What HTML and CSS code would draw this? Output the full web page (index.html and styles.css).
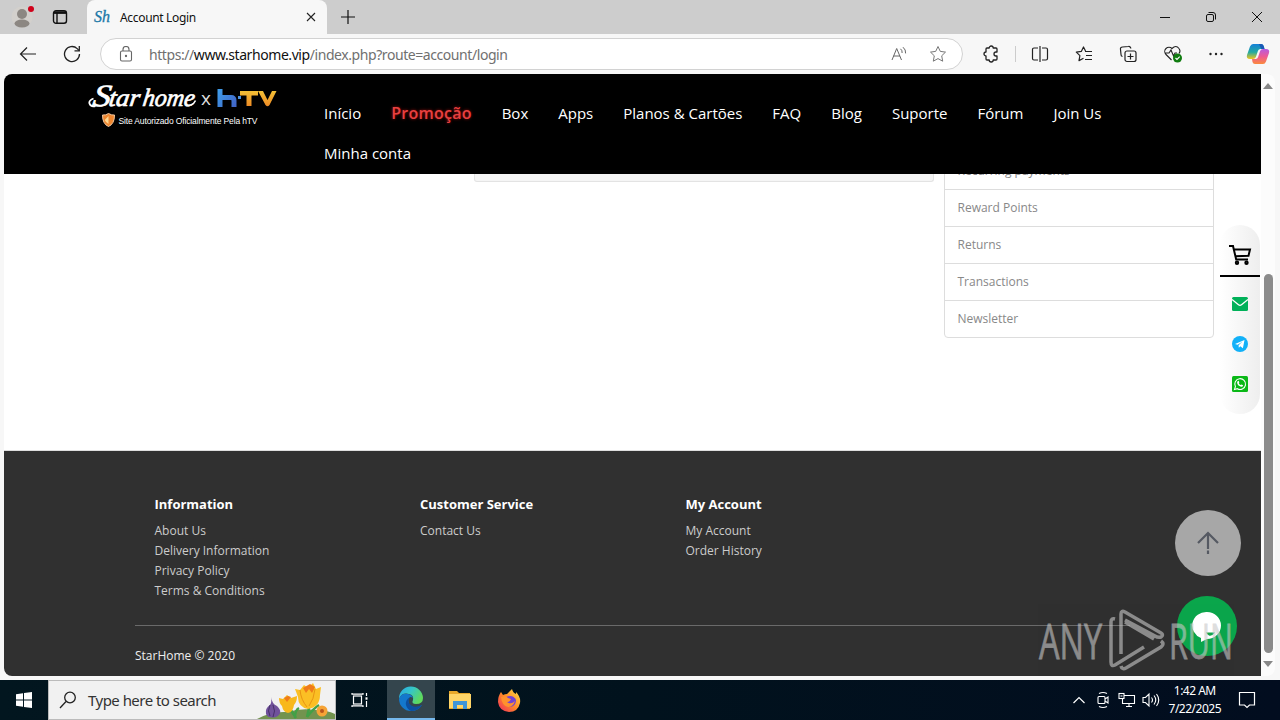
FILE: index.html
```html
<!DOCTYPE html>
<html lang="pt">
<head>
  <meta charset="utf-8">
  <meta name="viewport" content="width=device-width, initial-scale=1">
  <title>Account Login</title>
  <link rel="stylesheet" href="styles.css">
</head>
<body>
  <!-- Tab strip -->
  <div class="tab-strip">
    <svg class="profile" width="24" height="24" viewBox="0 0 24 24">
      <circle cx="11" cy="12" r="10.500" fill="#d3d0cc"/>
      <circle cx="11" cy="9" r="5" fill="#8c8782"/>
      <ellipse cx="11" cy="18.500" rx="7.500" ry="4" fill="#8c8782"/>
      <circle cx="20" cy="4" r="4" fill="#cdcdcd"/>
      <circle cx="20" cy="4" r="3" fill="#d0021b"/>
    </svg>
    <svg class="workspaces" width="16" height="16" viewBox="0 0 16 16" fill="none" stroke="#111" stroke-width="1.400">
      <rect x="1.500" y="1.700" width="13" height="12.600" rx="2.500"/>
      <path d="M2 3.600h12" stroke-width="2.600"/>
      <path d="M5 4v10"/>
    </svg>
    <div class="tab">
      <span class="favicon">Sh</span>
      <span class="tab-title">Account Login</span>
      <svg class="tab-close" width="10" height="10" viewBox="0 0 10 10" stroke="#222" stroke-width="1.100"><path d="M1 1l8 8M9 1l-8 8"/></svg>
    </div>
    <svg class="new-tab" width="14" height="14" viewBox="0 0 14 14" stroke="#111" stroke-width="1.200"><path d="M7 0v14M0 7h14"/></svg>
    <div class="window-buttons">
      <svg width="12" height="12" viewBox="0 0 12 12" stroke="#111"><path d="M1 6.500h10"/></svg>
      <svg width="12" height="12" viewBox="0 0 12 12" stroke="#111" fill="none"><rect x="1.500" y="3.500" width="7" height="7" rx="1.500"/><path d="M3.500 1.500h4.500a2.500 2.500 0 0 1 2.500 2.500v4.500"/></svg>
      <svg width="12" height="12" viewBox="0 0 12 12" stroke="#111"><path d="M1 1l10 10M11 1L1 11"/></svg>
    </div>
  </div>

  <!-- Toolbar -->
  <div class="toolbar">
    <svg class="back" width="18" height="16" viewBox="0 0 18 16" fill="none" stroke="#222" stroke-width="1.200"><path d="M17 8H1.500M8 1.500L1.500 8 8 14.500"/></svg>
    <svg class="reload" width="18" height="18" viewBox="0 0 18 18" fill="none" stroke="#222" stroke-width="1.300"><path d="M16.500 9a7.500 7.500 0 1 1-2.300-5.400l2 2"/><path d="M16.300 1v4.800h-4.800"/></svg>
    <div class="address-bar">
      <svg width="14" height="16" viewBox="0 0 14 16" fill="none" stroke="#666" stroke-width="1.100"><rect x="1.500" y="5" width="11" height="10" rx="1.500"/><path d="M4 5V3.500a3 3 0 0 1 6 0V5"/><circle cx="7" cy="10" r=".6" fill="#555"/></svg>
      <span class="url">https://<b>www.starhome.vip</b>/index.php?route=account/login</span>
      <svg class="read-aloud" width="16" height="16" viewBox="0 0 16 16" fill="none" stroke="#666"><path d="M1 14L5.700 2.500 10.500 14M2.500 10h6.500M9.500 2.800q2 1.700 1.600 4.200M12 1.200q3 2.500 2.600 6.200"/></svg>
      <svg width="18" height="18" viewBox="0 0 18 18" fill="none" stroke="#777" stroke-linejoin="round"><path d="M9 1.500l2.300 4.900 5.200.7-3.800 3.700 1 5.400L9 13.600l-4.700 2.600 1-5.400L1.500 7.100l5.200-.7z"/></svg>
    </div>
    <div class="toolbar-icons">
      <svg width="18" height="18" viewBox="0 0 18 18" fill="none" stroke="#222" stroke-width="1.300" stroke-linejoin="round"><path d="M5 3h2.200a2 2 0 0 1 4 0H14a1 1 0 0 1 1 1v3h-1a2 2 0 0 0 0 4h1v3a1 1 0 0 1-1 1h-2.800a2 2 0 0 1-4 0H5a1 1 0 0 1-1-1v-3a2 2 0 0 1 0-4V4a1 1 0 0 1 1-1z"/></svg>
      <i class="separator"></i>
      <svg width="18" height="18" viewBox="0 0 18 18" fill="none" stroke="#222" stroke-width="1.200"><path d="M7 3H3a1.500 1.500 0 0 0-1.500 1.500v9A1.500 1.500 0 0 0 3 15h4M11 3h4a1.500 1.500 0 0 1 1.500 1.500v9A1.500 1.500 0 0 1 15 15h-4M9 1v16"/></svg>
      <svg width="18" height="18" viewBox="0 0 18 18" fill="none" stroke="#222" stroke-width="1.200" stroke-linejoin="round"><path d="M10.500 6L8.500 2 6.300 6.400l-5 .7 3.600 3.500-.9 5 4.500-2.300M10 6.500h7M11 10.500h6M10 14.500h7"/></svg>
      <svg width="18" height="18" viewBox="0 0 18 18" fill="none" stroke="#222" stroke-width="1.200"><path d="M3.500 11.500A2 2 0 0 1 2 9.500l-.5-5a2 2 0 0 1 2-2.500l6-.5a2 2 0 0 1 2.300 2"/><rect x="6" y="6" width="11" height="10.500" rx="2"/><path d="M11.500 8.500v6M8.500 11.500h6"/></svg>
      <svg width="20" height="18" viewBox="0 0 20 18" fill="none" stroke="#222" stroke-width="1.100"><path d="M8.500 15L3 9.500a4 4 0 0 1 6-6q4-4 7 0a4 4 0 0 1 0 5M2 8h4l2-3 2.500 6 1.500-3h2"/><circle cx="14.500" cy="13" r="4.500" fill="#107c10" stroke="none"/><path d="M12.500 13l1.500 1.500 2.700-2.800" stroke="#fff"/></svg>
      <svg class="more" width="16" height="18" viewBox="0 0 16 18" fill="#222"><circle cx="2.500" cy="9" r="1.200"/><circle cx="8" cy="9" r="1.200"/><circle cx="13.500" cy="9" r="1.200"/></svg>
      <svg class="copilot" width="24" height="22" viewBox="0 0 24 22">
        <defs>
          <linearGradient id="cp-a" x1="0" y1="0" x2="0" y2="1"><stop offset="0" stop-color="#1580d8"/><stop offset=".55" stop-color="#24aaa0"/><stop offset="1" stop-color="#f2c51d"/></linearGradient>
          <linearGradient id="cp-b" x1="0" y1="0" x2="0" y2="1"><stop offset="0" stop-color="#b65be0"/><stop offset=".5" stop-color="#ee5a94"/><stop offset="1" stop-color="#fb8a3c"/></linearGradient>
        </defs>
        <path d="M7 1h8q2 0 2.700 2l.8 3h-4q-2 0-2.600 2l-2 6q-.8 2-3 2H4q-4 0-3-4L4 3.500Q5 1 7 1z" fill="url(#cp-a)"/>
        <path d="M17 21H9q-2 0-2.500-2L6 16h3.500q2 0 2.600-2l2-6q.8-2 3-2H20q4 0 3 4l-3 8.500Q19 21 17 21z" fill="url(#cp-b)"/>
        <path d="M13 1h2q2 0 2.700 2l.8 3h-3.300z" fill="#1959b5"/>
      </svg>
    </div>
  </div>

  <!-- Web page -->
  <div class="viewport">
    <div class="page">
      <header class="site-header">
        <a class="logo">
          <svg width="192" height="50" viewBox="0 0 192 50">
            <defs>
              <linearGradient id="h-blue" x1="0" y1="0" x2="1" y2="1"><stop offset="0" stop-color="#3f9be8"/><stop offset="1" stop-color="#4166c8"/></linearGradient>
              <linearGradient id="tv-gold" x1="0" y1="0" x2="0" y2="1"><stop offset="0" stop-color="#f4c136"/><stop offset="1" stop-color="#ee8a25"/></linearGradient>
            </defs>
            <g class="logo-script" transform="translate(0 27) skewX(-8)">
              <text x="4" y="0" font-size="31" textLength="18" lengthAdjust="spacingAndGlyphs">S</text>
              <text x="20" y="0" font-size="25" textLength="31" lengthAdjust="spacingAndGlyphs">tar</text>
              <text x="54" y="0" font-size="25" textLength="52" lengthAdjust="spacingAndGlyphs">home</text>
            </g>
            <path d="M5.500 19.500q-5 2-4 5 1 3.500 6 2.500" fill="none" stroke="#fff" stroke-width="1.800"/>
            <path d="M103 26q3-1 4.500-4.500" fill="none" stroke="#fff" stroke-width="1.600"/>
            <text class="logo-x" x="113" y="26">x</text>
            <path d="M132 10v18M132 18.500h11q3 0 3 3V28" fill="none" stroke="url(#h-blue)" stroke-width="5"/>
            <rect x="150" y="17" width="3" height="3" fill="#4d91df"/>
            <path d="M152 12h18v4.500h-6.500V27h-5V16.500H152zM170 12h5l4.500 9 4.500-9h4.500l-7 14q-2 2.500-4 0z" fill="url(#tv-gold)"/>
            <path d="M20.500 34.500q3.500 2 6 1.500 0 9-6 11.500-6-2.500-6-11.500 3 .5 6-1.500z" fill="#ee8630" stroke="#f3c9a0"/>
            <path d="M20.500 37v8q-3-2-3.800-4z" fill="#ffd890"/>
            <text class="logo-note" x="30.500" y="45" textLength="139">Site Autorizado Oficialmente Pela hTV</text>
          </svg>
        </a>
        <nav class="menu">
          <a>Início</a>
          <a class="promo">Promoção</a>
          <a>Box</a>
          <a>Apps</a>
          <a>Planos &amp; Cartões</a>
          <a>FAQ</a>
          <a>Blog</a>
          <a>Suporte</a>
          <a>Fórum</a>
          <a>Join Us</a>
          <a>Minha conta</a>
        </nav>
      </header>

      <main class="content">
        <div class="well"></div>
        <div class="list-group">
          <a>Recurring payments</a>
          <a>Reward Points</a>
          <a>Returns</a>
          <a>Transactions</a>
          <a>Newsletter</a>
        </div>
      </main>

      <footer class="site-footer">
        <div class="footer-columns">
          <div class="footer-column">
            <h5>Information</h5>
            <a>About Us</a>
            <a>Delivery Information</a>
            <a>Privacy Policy</a>
            <a>Terms &amp; Conditions</a>
          </div>
          <div class="footer-column">
            <h5>Customer Service</h5>
            <a>Contact Us</a>
          </div>
          <div class="footer-column">
            <h5>My Account</h5>
            <a>My Account</a>
            <a>Order History</a>
          </div>
        </div>
        <p class="copyright">StarHome © 2020</p>
      </footer>

      <!-- Floating contact bar -->
      <div class="side-bar">
        <div class="cart">
          <svg width="24" height="22" viewBox="0 0 24 22" fill="none" stroke="#000" stroke-width="2"><path d="M1 2h4l3.200 13.500H20M6 5.500h16L20.500 11.800 7.500 12.300"/><circle cx="9" cy="18.800" r="1.200"/><circle cx="18.500" cy="18.800" r="1.200"/></svg>
        </div>
        <svg width="16" height="14" viewBox="0 0 16 14"><rect width="16" height="14" rx="1.500" fill="#00b159"/><path d="M0 2.500l6.500 5.300q1.500 1.200 3 0L16 2.500" fill="none" stroke="#fff" stroke-width="1.300"/></svg>
        <svg width="16" height="16" viewBox="0 0 16 16"><circle cx="8" cy="8" r="8" fill="#12b1f8"/><path d="M3 8l9.500-4-1.600 8.200-2.600-2-1.500 1.500-.2-2.500 4-3.700-5 3.200z" fill="#fff"/></svg>
        <svg width="16" height="16" viewBox="0 0 16 16"><rect width="16" height="16" rx="1.500" fill="#0ab817"/><path d="M2.500 13.500l.9-2.900A5.400 5.400 0 1 1 5.400 12.700z" fill="none" stroke="#fff" stroke-width="1.100"/><path d="M5.700 5.200q.8-.8 1.300.3l.3 1-.5.700q.7 1.400 2 1.900l.7-.7 1.600.8q-.3 1.800-2 1.500-3.700-.9-4-4.200 0-.8.600-1.300z" fill="#fff"/></svg>
      </div>
      <div class="back-to-top">
        <svg width="22" height="24" viewBox="0 0 22 24" fill="none" stroke="#555962" stroke-width="2.200"><path d="M1 12L11 2l10 10M11 2v16M11 19.500V23"/></svg>
      </div>
      <div class="chat-button">
        <svg width="32" height="32" viewBox="0 0 32 32"><path d="M16 2a14 13.500 0 0 1 0 27l-6 3v-4A14 13.500 0 0 1 16 2z" fill="#fff"/><path d="M15 22.500h9q-3 4-6 3-2-1-3-3z" fill="#16a34a"/></svg>
      </div>
      <svg class="watermark" width="200" height="68" viewBox="0 0 200 68">
        <g font-size="50">
          <text x="2" y="50.500" textLength="63" lengthAdjust="spacingAndGlyphs">ANY</text>
          <text x="132" y="50.500" textLength="64" lengthAdjust="spacingAndGlyphs">RUN</text>
        </g>
        <path d="M78 11q-4-1-4 3v40q0 5 4 3l29-18M84 46V6q0-4 4-2l36 21q3 2 0 4-3 1-6-1L88 12M84 58q1 4 5 2l35-21q4-3 0-6M88 14l29 17"/>
      </svg>
    </div>
    <div class="scrollbar">
      <i class="arrow-up"></i>
      <i class="thumb"></i>
      <i class="arrow-down"></i>
    </div>
  </div>

  <!-- Windows taskbar -->
  <div class="taskbar">
    <div class="start">
      <svg width="16" height="16" viewBox="0 0 16 16" fill="#fff"><path d="M0 2.200l7-1v6.300H0zM8 1l8-1v7.500H8zM0 8.500h7v6.300l-7-1zM8 8.500h8V16l-8-1z"/></svg>
    </div>
    <div class="search">
      <svg width="18" height="18" viewBox="0 0 18 18" fill="none" stroke="#222" stroke-width="1.300"><circle cx="11" cy="6.500" r="5.300"/><path d="M7 10.500L1 17"/></svg>
      <span>Type here to search</span>
      <svg class="flowers" width="78" height="38" viewBox="0 0 78 38">
        <path d="M0 38q14-8 30-7 14-4 28-2 12 0 20 4v5z" fill="#73934f"/>
        <path d="M39 37l-9-14M38 37q0-8 4-10M50 36l4-18M50 36q7-9 12-12" stroke="#43a047" stroke-width="2.500" fill="none"/>
        <path d="M14 16q1 7 6 9 7 7-1 11-8 2-10-3-1-6 4-9 2-3 1-8z" fill="#70519b"/>
        <path d="M13 24q-3 6 0 11M16 24q3 6 0 12" stroke="#463069" fill="none"/>
        <path d="M22 17l4 1 4-4 4 3 6-2q0 6-3 9-1 7-6 8-5-1-6-7-3-3-3-8z" fill="#f8b81c"/>
        <path d="M38 8l5 1 4-5 4 3 5-5 3 6 5-2-1 8q0 12-12 14-10-2-10-12z" fill="#fbbf24"/>
        <path d="M46 7l3 5 3-4 3 4 3-6-5-3zM27 17l3 4 4-5-3-1z" fill="#ef7b1a"/>
        <path d="M43 9q1 10 7 17M58 8q-1 10-6 17" stroke="#e89412" fill="none"/>
        <circle cx="65" cy="30" r="5.500" fill="#f6a436"/><circle cx="65" cy="30" r="2" fill="#b9551b"/>
      </svg>
    </div>
    <div class="task task-view">
      <svg width="18" height="18" viewBox="0 0 18 18" fill="none" stroke="#fff" stroke-width="1.200"><rect x="2.500" y="5" width="8" height="8"/><path d="M1 2v1.200h11V2M1 16v-1.200h11V16M15.500 2v3M15.500 10v6"/><path d="M14.500 7.500h2" stroke-width="2.400"/></svg>
    </div>
    <div class="task active">
      <svg width="26" height="26" viewBox="0 0 26 26">
        <defs>
          <linearGradient id="edge-a" x1="0" y1="0" x2="1" y2=".5"><stop offset="0" stop-color="#28a8e8"/><stop offset=".5" stop-color="#35c5c8"/><stop offset="1" stop-color="#5fd95c"/></linearGradient>
        </defs>
        <path d="M1 13A12 12 0 0 1 25 12q0 6-7 6-5 0-3-4 1-5-4-6Q4 6 1 13z" fill="url(#edge-a)"/>
        <path d="M1 13Q3 7 10 8q4 .5 5 4-1-1-3-1-4 4 1 9 5 3 11-1-4 6-11 6A12 12 0 0 1 1 13z" fill="#1478cc"/>
        <path d="M12 11q-5 3-4 8 1 4 5 6 7 0 11-6-6 3-10 1-6-4-2-9z" fill="#0d4f9f"/>
      </svg>
    </div>
    <div class="task">
      <svg width="24" height="22" viewBox="0 0 24 22"><path d="M1 2h8l2 2h11v16H1z" fill="#e9a92a"/><path d="M1 5h22v14H1z" fill="#ffd567"/><path d="M5 12h14v8h-4v-4H9v4H5z" fill="#3f95d7"/></svg>
    </div>
    <div class="task">
      <svg width="24" height="24" viewBox="0 0 24 24">
        <defs><linearGradient id="fx" x1="1" y1="0" x2="0" y2="1"><stop offset="0" stop-color="#ffe14a"/><stop offset=".5" stop-color="#ff8a26"/><stop offset="1" stop-color="#ee2861"/></linearGradient></defs>
        <path d="M4 4l2 3q2-1 4-1l5-5q1 4 4 5V4q5 5 4 11-2 9-11 9Q2 23 1 14q0-6 3-10z" fill="url(#fx)"/>
        <path d="M9 9q7-3 10 3 0 6-6 7-6-1-6-6 1-3 2-4z" fill="#7142d5"/>
        <path d="M4 9q5-2 7 1l3 1q-1 3-4 3 4 3 8-1-2 6-7 6-6-1-7-10z" fill="#ff922d"/>
      </svg>
    </div>
    <div class="tray">
      <svg width="12" height="8" viewBox="0 0 12 8" fill="none" stroke="#fff" stroke-width="1.200"><path d="M.5 7L6 1.500 11.500 7"/></svg>
      <svg class="meet-now" width="14" height="18" viewBox="0 0 14 18" fill="none" stroke="#fff" stroke-width="1.100"><rect x="2" y="5.500" width="7" height="7" rx="1"/><path d="M9 8l3-2v6l-3-2M3 2.500q4-2 8 0M3 15.500q4 2 8 0"/></svg>
      <svg width="18" height="16" viewBox="0 0 18 16" fill="none" stroke="#fff" stroke-width="1.100"><path d="M6 3.500h10.500v8H4.500V7M8 14.500h6M11 11.500v3"/><rect x="1" y="1.500" width="5" height="5"/><path d="M2.500 4h2"/></svg>
      <svg class="volume" width="18" height="16" viewBox="0 0 18 16" fill="none" stroke="#fff" stroke-width="1.100"><path d="M1 5.500h2.500L7 2v12l-3.500-3.500H1zM9.500 5.500q2 2.500 0 5M12 3.500q3.500 4.500 0 9M14.500 2q4.500 6 0 12"/></svg>
      <div class="clock"><span>1:42 AM</span><span>7/22/2025</span></div>
      <svg class="notifications" width="18" height="18" viewBox="0 0 18 18" fill="none" stroke="#fff" stroke-width="1.200"><path d="M1.500 1.500h15v12.500h-5L9 16.500 6.500 14h-5z"/></svg>
    </div>
  </div>
</body>
</html>
```
FILE: styles.css
```css
:root {
  --chrome: #f7f7f7;
  --strip: #cdcdcd;
  --footer: #303030;
  --ui-font: "Noto Sans", "Open Sans", sans-serif;
}

* {
  box-sizing: border-box;
  margin: 0;
  padding: 0;
}

body {
  width: 1280px;
  height: 720px;
  overflow: hidden;
  display: flex;
  flex-direction: column;
  background: var(--chrome);
  font-family: "Open Sans", sans-serif;
}

svg {
  display: block;
  flex: none;
}

/* Tab strip */
.tab-strip {
  display: flex;
  align-items: center;
  height: 34px;
  padding-left: 11px;
  background: var(--strip);
  font-family: var(--ui-font);
}

.workspaces {
  margin: 0 19px 0 17px;
}

.tab {
  display: flex;
  align-items: center;
  width: 240px;
  height: 34px;
  padding: 0 11px 0 7px;
  background: var(--chrome);
  border-radius: 8px 8px 0 0;
}

.favicon {
  width: 26px;
  font: italic 16px "Liberation Serif", serif;
  color: #2079a8;
  -webkit-text-stroke: 0.3px #2079a8;
}

.tab-title {
  font-size: 12px;
  letter-spacing: -0.33px;
  color: #111;
}

.tab-close {
  margin-left: auto;
}

.new-tab {
  margin-left: 14px;
}

.window-buttons {
  display: flex;
  gap: 34px;
  margin-left: auto;
  padding-right: 17px;
}

/* Toolbar */
.toolbar {
  display: flex;
  align-items: center;
  height: 40px;
  padding-left: 19px;
  font-family: var(--ui-font);
}

.reload {
  margin: 0 19px 0 26px;
}

.address-bar {
  display: flex;
  align-items: center;
  width: 863px;
  height: 32px;
  padding: 0 15px 0 18px;
  background: #fff;
  border: 1px solid #d2d2d2;
  border-radius: 16px;
}

.url {
  margin-left: 16px;
  font-size: 14px;
  letter-spacing: -0.43px;
  color: #707070;
}

.url b {
  font-weight: 400;
  color: #111;
}

.read-aloud {
  margin: 0 22px 0 auto;
}

.toolbar-icons {
  display: flex;
  align-items: center;
  gap: 26px;
  margin-left: 19px;
}

.toolbar-icons .separator {
  width: 1px;
  height: 16px;
  margin: 0 -11px;
  background: #ccc;
}

.toolbar-icons .more {
  margin-left: -1px;
}

.toolbar-icons .copilot {
  margin-left: -4px;
}

/* Page area */
.viewport {
  display: flex;
  height: 602px;
  margin: 0 5px 0 4px;
  background: #fcfcfc;
  border-radius: 8px;
  overflow: hidden;
}

.page {
  position: relative;
  display: flex;
  flex-direction: column;
  width: 1257px;
  background: #fff;
}

.site-header {
  display: flex;
  height: 100px;
  background: #000;
}

.logo {
  width: 290px;
  padding: 5px 0 0 84px;
}

.logo-script {
  fill: #fff;
  stroke: #fff;
  stroke-width: 0.7px;
  font-family: "Liberation Serif", serif;
  font-style: italic;
}

.logo-x {
  fill: #ddd;
  font: 19px "Open Sans", sans-serif;
}

.logo-note {
  fill: #fff;
  font: 8.5px "Liberation Sans", sans-serif;
}

.menu {
  display: flex;
  flex-wrap: wrap;
  width: 840px;
  padding-left: 30px;
  column-gap: 30px;
  align-content: flex-start;
  padding-top: 19px;
}

.menu a {
  font-size: 15px;
  line-height: 40px;
  color: #fff;
}

.menu .promo {
  width: 80.5px;
  font-size: 16px;
  font-weight: 600;
  letter-spacing: 0.25px;
  color: #e84040;
  text-shadow: 0 0 3px #a01010;
}

.content {
  display: flex;
  height: 276px;
  padding-left: 470px;
  overflow: hidden;
}

.well {
  width: 460px;
  height: 8px;
  background: #f5f5f5;
  border: 1px solid #e3e3e3;
  border-top: 0;
  border-radius: 0 0 3px 3px;
}

.list-group {
  width: 270px;
  height: 186px;
  margin: -22px 0 0 10px;
  border: 1px solid #ddd;
  border-radius: 4px;
}

.list-group a {
  display: block;
  height: 37px;
  padding-left: 12.5px;
  border-bottom: 1px solid #ddd;
  font-size: 12px;
  line-height: 36px;
  color: #888;
}

.list-group a:last-child {
  border-bottom: 0;
}

/* Footer */
.site-footer {
  height: 226px;
  padding: 44px 131px 0;
  background: var(--footer);
  border-top: 1px solid #ddd;
}

.footer-columns {
  display: flex;
  height: 131px;
  padding-left: 19.5px;
  border-bottom: 1px solid #6a6a6a;
}

.footer-column {
  width: 265.5px;
}

.footer-column h5 {
  margin-bottom: 7px;
  font-size: 13px;
  line-height: 19px;
  color: #fff;
}

.footer-column a {
  display: block;
  font-size: 12px;
  line-height: 20px;
  color: #ccc;
}

.copyright {
  margin-top: 20px;
  font-size: 12px;
  line-height: 20px;
  color: #eee;
}

/* Floating items over the page */
.side-bar {
  position: absolute;
  top: 151px;
  right: 1px;
  display: flex;
  flex-direction: column;
  align-items: center;
  width: 40px;
  height: 189px;
  background: linear-gradient(90deg, #fff, #eee);
  border-radius: 20px;
}

.cart {
  width: 40px;
  height: 52px;
  padding: 19px 0 0 8px;
  border-bottom: 2px solid #000;
}

.side-bar > svg {
  margin-top: 20px;
}

.side-bar > svg + svg {
  margin-top: 24px;
}

.side-bar > .cart + svg + svg {
  margin-top: 25px;
}

.back-to-top,
.chat-button {
  position: absolute;
  display: flex;
  align-items: center;
  justify-content: center;
  border-radius: 50%;
}

.back-to-top {
  top: 436px;
  right: 20px;
  width: 66px;
  height: 66px;
  background: #a7a7a7;
}

.chat-button {
  top: 522px;
  right: 24px;
  width: 60px;
  height: 60px;
  background: #0aa64b;
}

.watermark {
  position: absolute;
  top: 534px;
  left: 1033px;
  opacity: 0.6;
  fill: #c8c8c8;
  stroke: #c8c8c8;
  stroke-width: 0.8px;
  font-family: "Open Sans", sans-serif;
}

.watermark path {
  fill: none;
  stroke-width: 3.5px;
}

/* Scrollbar */
.scrollbar {
  display: flex;
  flex-direction: column;
  align-items: center;
  width: 14px;
  padding-top: 9px;
}

.arrow-up,
.arrow-down {
  border: 5px solid transparent;
}

.arrow-up {
  border-top: 0;
  border-bottom: 6px solid #888;
}

.arrow-down {
  margin-top: 8px;
  border-bottom: 0;
  border-top: 6px solid #888;
}

.thumb {
  width: 9px;
  height: 379px;
  margin-top: 185px;
  background: #8b8b8b;
  border-radius: 5px;
}

/* Taskbar */
.taskbar {
  display: flex;
  height: 40px;
  margin-top: 4px;
  background: linear-gradient(90deg, #02161f, #01121d 50%, #020d1f);
  font-family: var(--ui-font);
}

.start,
.task {
  display: flex;
  align-items: center;
  justify-content: center;
  width: 48px;
}

.search {
  display: flex;
  align-items: center;
  width: 288px;
  padding-left: 10px;
  background: #f1f1f1;
  border: 1px solid #bbb;
  color: #333;
  font-size: 15px;
  letter-spacing: -0.53px;
}

.search span {
  margin-left: 11px;
}

.flowers {
  margin-left: auto;
}

.task {
  width: 49px;
}

.task-view {
  width: 51px;
  padding-right: 3px;
}

.task.active {
  width: 48px;
  background: #34454d;
  border-bottom: 2px solid #76b9ed;
}

.tray {
  display: flex;
  align-items: center;
  gap: 8px;
  margin-left: auto;
  padding-right: 24px;
  color: #fff;
}

.meet-now {
  margin-left: 3px;
}

.volume {
  margin: 0 1px 0 -2px;
}

.clock {
  display: flex;
  flex-direction: column;
  align-items: center;
  font-size: 12px;
  line-height: 18px;
  letter-spacing: -0.5px;
}

.notifications {
  margin-left: 9px;
}
```
